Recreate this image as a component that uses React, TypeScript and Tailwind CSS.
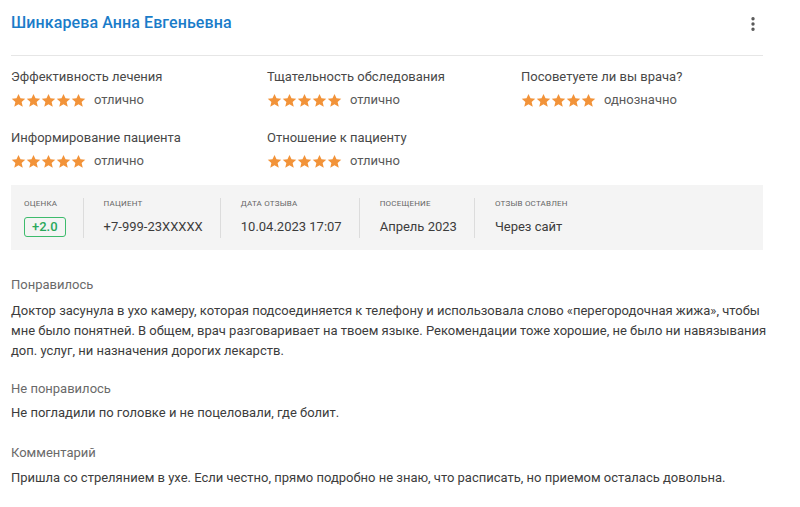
import { MoreVertical } from "lucide-react";

type Rating = { label: string; value: string };

const ratings: Rating[] = [
  { label: "Эффективность лечения", value: "отлично" },
  { label: "Тщательность обследования", value: "отлично" },
  { label: "Посоветуете ли вы врача?", value: "однозначно" },
  { label: "Информирование пациента", value: "отлично" },
  { label: "Отношение к пациенту", value: "отлично" },
];

const meta = [
  { label: "Пациент", value: "+7-999-23XXXXX" },
  { label: "Дата отзыва", value: "10.04.2023 17:07" },
  { label: "Посещение", value: "Апрель 2023" },
  { label: "Отзыв оставлен", value: "Через сайт" },
];

function Star() {
  return (
    <svg width="15" height="15" viewBox="0 0 24 24" className="shrink-0">
      <path
        fill="#f29339"
        d="M12 1.5l3.2 7 7.6.7-5.8 5.1 1.8 7.5L12 17.9l-6.8 3.9 1.8-7.5-5.8-5.1 7.6-.7z"
      />
    </svg>
  );
}

export default function App() {
  return (
    <div
      className="w-[800px] h-[507px] bg-white text-[#3c3c3c] overflow-hidden"
      style={{ fontFamily: "Roboto, 'Liberation Sans', sans-serif" }}
    >
      <div className="w-[752px] ml-[11px]">
        {/* Шапка */}
        <div className="flex items-start justify-between h-[56px] pt-[11px] border-b border-[#e6e6e6]">
          <h2 className="text-[16px] leading-[24px] font-medium text-[#1a7cc9] tracking-[0.1px]">
            Шинкарева Анна Евгеньевна
          </h2>
          <MoreVertical size={18} className="text-[#555] mr-[1px] mt-[4px]" strokeWidth={2.5} />
        </div>

        {/* Оценки */}
        <div className="grid grid-cols-[256px_254px_1fr] gap-y-[22px] mt-[13px]">
          {ratings.map((r) => (
            <div key={r.label}>
              <p className="text-[13px] leading-[16px] text-[#484848]">{r.label}</p>
              <div className="flex items-center mt-[7px] h-[16px]">
                {[0, 1, 2, 3, 4].map((i) => (
                  <Star key={i} />
                ))}
                <span className="ml-[8px] text-[13px] text-[#5a5a5a]">{r.value}</span>
              </div>
            </div>
          ))}
        </div>

        {/* Мета */}
        <div className="mt-[16px] h-[65px] bg-[#f4f4f4] flex items-center pl-[13px]">
          <div className="pr-[17px] border-r border-[#dcdcdc] h-[40px]">
            <p className="text-[8px] uppercase text-[#666] leading-[12px] tracking-[0.2px]">Оценка</p>
            <span className="mt-[7px] inline-block border border-[#3dbb6c] rounded-[3px] px-[7px] h-[20px] leading-[18px] text-[13px] font-medium text-[#2aa85b]">
              +2.0
            </span>
          </div>
          {meta.map((m, idx) => (
            <div
              key={m.label}
              className={`pl-[20px] h-[40px] ${idx < meta.length - 1 ? "pr-[17px] border-r border-[#dcdcdc]" : ""}`}
            >
              <p className="text-[8px] uppercase text-[#666] leading-[12px] tracking-[0.2px]">{m.label}</p>
              <p className="mt-[9px] text-[13px] leading-[16px] text-[#3c3c3c] whitespace-nowrap">{m.value}</p>
            </div>
          ))}
        </div>

        {/* Тексты */}
        <div className="mt-[25px] text-[13px] w-[780px]">
          <p className="text-[#6a6a6a] leading-[20px]">Понравилось</p>
          <p className="mt-[6px] leading-[20px]">
            Доктор засунула в ухо камеру, которая подсоединяется к телефону и использовала слово «перегородочная жижа», чтобы
            <br />
            мне было понятней. В общем, врач разговаривает на твоем языке. Рекомендации тоже хорошие, не было ни навязывания
            <br />
            доп. услуг, ни назначения дорогих лекарств.
          </p>

          <p className="mt-[18px] text-[#6a6a6a] leading-[20px]">Не понравилось</p>
          <p className="mt-[4px] leading-[20px]">Не погладили по головке и не поцеловали, где болит.</p>

          <p className="mt-[20px] text-[#6a6a6a] leading-[20px]">Комментарий</p>
          <p className="mt-[5px] leading-[20px]">
            Пришла со стрелянием в ухе. Если честно, прямо подробно не знаю, что расписать, но приемом осталась довольна.
          </p>
        </div>
      </div>
    </div>
  );
}
